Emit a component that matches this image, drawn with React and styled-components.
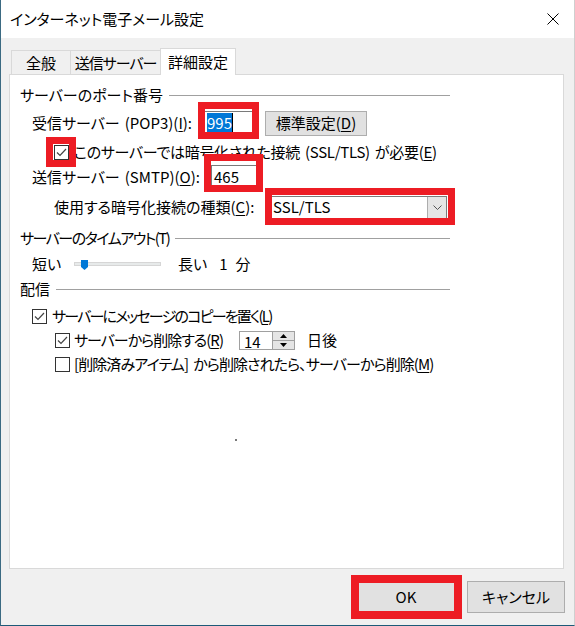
import React from 'react'
import styled, { createGlobalStyle } from 'styled-components'

const GlobalStyle = createGlobalStyle`
  html, body {
    margin: 0;
    padding: 0;
    background: #ffffff;
  }
`

const Window = styled.div`
  width: 575px;
  height: 626px;
  box-sizing: border-box;
  display: flex;
  flex-direction: column;
  background: #f0f0f0;
  border-left: 1px solid #3b6a82;
  border-right: 1px solid #cfcfcf;
  border-bottom: 1px solid #1d5a78;
  font-family: "Noto Sans CJK JP", "Noto Sans", sans-serif;
  font-size: 15px;
  font-feature-settings: "palt";
  color: #000;
  line-height: 20px;
`

const TitleBar = styled.div`
  height: 38px;
  flex: none;
  background: #fff;
  display: flex;
  align-items: center;
  justify-content: space-between;
  padding: 0 15px 0 9px;
`

const Title = styled.span`
  font-size: 15px;
`

const CloseButton = styled.div`
  width: 12px;
  height: 12px;
  display: flex;
`

const Body = styled.div`
  flex: 1;
  display: flex;
  flex-direction: column;
  padding: 10px 9px 0 8px;
`

const TabStrip = styled.div`
  height: 26px;
  display: flex;
  align-items: flex-end;
  padding-left: 2px;
`

const Tab = styled.div`
  box-sizing: border-box;
  width: ${p => p.$w}px;
  height: ${p => (p.$active ? 27 : 24)}px;
  margin-left: -1px;
  margin-bottom: ${p => (p.$active ? -1 : 0)}px;
  position: relative;
  z-index: ${p => (p.$active ? 1 : 0)};
  display: flex;
  align-items: center;
  justify-content: center;
  letter-spacing: ${p => p.$ls || 0}px;
  background: ${p => (p.$active ? '#fff' : '#f0f0f0')};
  border: 1px solid #d9d9d9;
  border-bottom: none;
  &:first-child {
    margin-left: 0;
  }
`

const Panel = styled.div`
  box-sizing: border-box;
  height: 495px;
  margin-right: 1px;
  background: #fff;
  border: 1px solid #d9d9d9;
  padding: 10px 0 0 10px;
  display: flex;
  flex-direction: column;
`

const GroupHeader = styled.div`
  width: 430px;
  height: ${p => p.$h}px;
  flex: none;
  display: flex;
  align-items: center;
  gap: 6px;
  letter-spacing: ${p => p.$ls || 0}px;
  &::after {
    content: '';
    flex: 1;
    height: 1px;
    background: #a0a0a0;
  }
`

const Row = styled.div`
  height: ${p => p.$h}px;
  flex: none;
  display: flex;
  align-items: center;
  padding-left: ${p => p.$indent}px;
  white-space: nowrap;
`

const Label = styled.span`
  width: ${p => (p.$w ? `${p.$w}px` : 'auto')};
  flex: none;
  margin-left: ${p => p.$ml || 0}px;
  letter-spacing: ${p => p.$ls || 0}px;
`

const U = styled.span`
  text-decoration: underline;
  text-underline-offset: 2px;
`

const Gap = styled.span`
  display: inline-block;
  width: 5px;
`

const Marked = styled.div`
  position: relative;
  display: flex;
  flex: none;
`

const Highlight = styled.div`
  position: absolute;
  top: ${p => p.$t}px;
  right: ${p => p.$r}px;
  bottom: ${p => p.$b}px;
  left: ${p => p.$l}px;
  border: ${p => p.$bw || 7}px solid #ed1c24;
  pointer-events: none;
  z-index: 2;
`

const TextBox = styled.div`
  box-sizing: border-box;
  width: ${p => p.$w}px;
  height: ${p => p.$h}px;
  border: 1px solid #7a7a7a;
  background: #fff;
  display: flex;
  align-items: center;
  padding-left: 2px;
`

const Selected = styled.span`
  background: #0078d7;
  color: #fff;
  border-right: 1px solid #000;
`

const PushButton = styled.div`
  box-sizing: border-box;
  width: ${p => p.$w}px;
  height: ${p => p.$h}px;
  margin-left: ${p => p.$ml || 0}px;
  background: #e1e1e1;
  border: 1px solid ${p => (p.$default ? '#0078d7' : '#adadad')};
  display: flex;
  align-items: center;
  justify-content: center;
`

const Check = styled.div`
  box-sizing: border-box;
  width: 15px;
  height: 15px;
  flex: none;
  border: 1px solid #333;
  background: #fff;
  display: flex;
  align-items: center;
  justify-content: center;
`

const Select = styled.div`
  box-sizing: border-box;
  width: 177px;
  height: 23px;
  border: 1px solid #7a7a7a;
  background: #fff;
  display: flex;
  align-items: stretch;
`

const SelectValue = styled.span`
  flex: 1;
  padding-left: 2px;
  display: flex;
  align-items: center;
`

const SelectArrow = styled.div`
  width: 18px;
  background: #e5e5e5;
  border-left: 1px solid #adadad;
  display: flex;
  align-items: center;
  justify-content: center;
`

const Track = styled.div`
  position: relative;
  box-sizing: border-box;
  width: 87px;
  height: 4px;
  flex: none;
  background: #e7eaea;
  border: 1px solid #d6d6d6;
`

const Thumb = styled.svg`
  position: absolute;
  left: 6px;
  top: -3px;
`

const Spinner = styled.div`
  box-sizing: border-box;
  width: 56px;
  height: 19px;
  border: 1px solid #a0a0a0;
  background: #fff;
  display: flex;
`

const SpinValue = styled.span`
  flex: 1;
  padding-left: 4px;
  display: flex;
  align-items: center;
  padding-top: 3px;
`

const SpinButtons = styled.div`
  width: 21px;
  display: flex;
  flex-direction: column;
  border-left: 1px solid #a0a0a0;
`

const SpinHalf = styled.div`
  flex: 1;
  background: #e5e5e5;
  display: flex;
  align-items: center;
  justify-content: center;
  & + & {
    border-top: 1px solid #a0a0a0;
  }
`

const Speck = styled.div`
  width: 2px;
  height: 2px;
  margin: 63px 0 0 215px;
  background: #7a7a7a;
`

const Footer = styled.div`
  height: 56px;
  display: flex;
  justify-content: flex-end;
  align-items: flex-start;
  gap: 12px;
  padding-top: 12px;
  box-sizing: border-box;
`

const CheckMark = () => (
  <svg width="11" height="9" viewBox="0 0 11 9">
    <path d="M1 4.5 L4 7.5 L10 1" fill="none" stroke="#444" strokeWidth="1.2" />
  </svg>
)

const Checkbox = ({ checked }) => <Check>{checked && <CheckMark />}</Check>

const App = () => {
  return (
    <>
      <GlobalStyle />
      <Window>
        <TitleBar>
          <Title>インターネット電子メール設定</Title>
          <CloseButton>
            <svg width="12" height="12" viewBox="0 0 12 12">
              <path d="M0.5 0.5 L11.5 11.5 M11.5 0.5 L0.5 11.5" stroke="#000" strokeWidth="1" />
            </svg>
          </CloseButton>
        </TitleBar>

        <Body>
          <TabStrip>
            <Tab $w={60}>全般</Tab>
            <Tab $w={91} $ls={-1}>送信サーバー</Tab>
            <Tab $w={76} $active>詳細設定</Tab>
          </TabStrip>

          <Panel>
            <GroupHeader $h={20}>サーバーのポート番号</GroupHeader>

            <Row $h={36} $indent={12}>
              <Label $w={172}>受信サーバー<Gap />(POP3)(<U>I</U>):</Label>
              <Marked>
                <TextBox $w={50} $h={24}>
                  <Selected>995</Selected>
                </TextBox>
                <Highlight $t={-9} $r={-5} $b={-4} $l={-6} />
              </Marked>
              <PushButton $w={102} $h={25} $ml={11}>標準設定(<U>D</U>)</PushButton>
            </Row>

            <Row $h={22} $indent={34}>
              <Marked>
                <Checkbox checked />
                <Highlight $t={-8} $r={-7} $b={-7} $l={-8} />
              </Marked>
              <Label $ml={5} $ls={-0.3}>このサーバーでは暗号化された接続<Gap />(SSL/TLS)<Gap />が必要(<U>E</U>)</Label>
            </Row>

            <Row $h={28} $indent={12}>
              <Label $w={179}>送信サーバー<Gap />(SMTP)(<U>O</U>):</Label>
              <Marked>
                <TextBox $w={46} $h={24}>465</TextBox>
                <Highlight $t={-11} $r={-6} $b={-3} $l={-7} />
              </Marked>
            </Row>

            <Row $h={32} $indent={34}>
              <Label $w={216}>使用する暗号化接続の種類(<U>C</U>):</Label>
              <Marked>
                <Select>
                  <SelectValue>SSL/TLS</SelectValue>
                  <SelectArrow>
                    <svg width="9" height="5" viewBox="0 0 9 5">
                      <path d="M0.5 0.5 L4.5 4.5 L8.5 0.5" fill="none" stroke="#555" strokeWidth="1" />
                    </svg>
                  </SelectArrow>
                </Select>
                <Highlight $t={-8} $r={-8} $b={-6} $l={-5} />
              </Marked>
            </Row>

            <GroupHeader $h={30} $ls={-1.5}>サーバーのタイムアウト(T)</GroupHeader>

            <Row $h={21} $indent={12}>
              <Label $w={42}>短い</Label>
              <Track>
                <Thumb width="7" height="10" viewBox="0 0 7 10">
                  <path d="M0 0 H7 V7 L3.5 10 L0 7 Z" fill="#0078d7" />
                </Thumb>
              </Track>
              <Label $ml={17}>長い</Label>
              <Label $ml={12}>1</Label>
              <Label $ml={8}>分</Label>
            </Row>

            <GroupHeader $h={30}>配信</GroupHeader>

            <Row $h={24} $indent={12}>
              <Checkbox checked />
              <Label $ml={5} $ls={-1.8}>サーバーにメッセージのコピーを置く(<U>L</U>)</Label>
            </Row>

            <Row $h={24} $indent={35}>
              <Checkbox checked />
              <Label $ml={4} $w={165} $ls={-1}>サーバーから削除する(<U>R</U>)</Label>
              <Spinner>
                <SpinValue>14</SpinValue>
                <SpinButtons>
                  <SpinHalf>
                    <svg width="7" height="4" viewBox="0 0 7 4"><path d="M0 4 L3.5 0 L7 4 Z" fill="#000" /></svg>
                  </SpinHalf>
                  <SpinHalf>
                    <svg width="7" height="4" viewBox="0 0 7 4"><path d="M0 0 L3.5 4 L7 0 Z" fill="#000" /></svg>
                  </SpinHalf>
                </SpinButtons>
              </Spinner>
              <Label $ml={12}>日後</Label>
            </Row>

            <Row $h={24} $indent={35}>
              <Checkbox />
              <Label $ml={4} $ls={-0.9}>[削除済みアイテム]<Gap />から削除されたら、サーバーから削除(<U>M</U>)</Label>
            </Row>

            <Speck />
          </Panel>

          <Footer>
            <Marked>
              <PushButton $w={98} $h={32} $default>OK</PushButton>
              <Highlight $t={-6} $r={-7} $b={-6} $l={-6} $bw={8} />
            </Marked>
            <PushButton $w={98} $h={32}>キャンセル</PushButton>
          </Footer>
        </Body>
      </Window>
    </>
  )
}

export default App
